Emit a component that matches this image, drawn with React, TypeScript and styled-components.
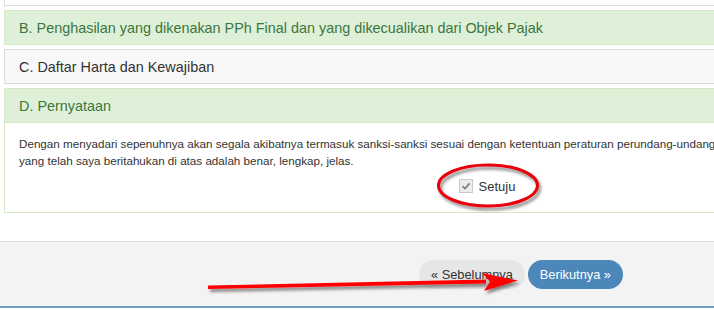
import React from 'react';
import styled, { createGlobalStyle } from 'styled-components';

const GlobalStyle = createGlobalStyle`
  html, body {
    margin: 0;
    padding: 0;
    background: #fff;
    overflow: hidden;
  }
  body {
    font-family: 'Liberation Sans', Arial, sans-serif;
    color: #333;
  }
`;

const Page = styled.div`
  position: relative;
  width: 714px;
  height: 310px;
  overflow: hidden;
`;

const PanelGroup = styled.div`
  display: flex;
  flex-direction: column;
  gap: 4px;
  width: 966px;
  margin-left: 4px;
`;

const PanelStub = styled.div`
  height: 5px;
  border: 1px solid #ddd;
  border-top: none;
  background: #fff;
`;

const Panel = styled.div<{ $tone: 'success' | 'default' }>`
  border: 1px solid ${(p) => (p.$tone === 'success' ? '#d6e9c6' : '#ddd')};
  background: #fff;
`;

const PanelHeading = styled.div<{ $tone: 'success' | 'default' }>`
  height: 33px;
  display: flex;
  align-items: center;
  padding: 0 14px;
  font-size: 14.4px;
  color: ${(p) => (p.$tone === 'success' ? '#3c763d' : '#333')};
  background: ${(p) => (p.$tone === 'success' ? '#dff0d8' : '#f8f8f8')};
`;

const PanelBody = styled.div`
  border-top: 1px solid #d6e9c6;
  padding: 12px 14px 16px;
  font-size: 11.65px;
  line-height: 17px;
`;

const Statement = styled.p`
  margin: 0 0 7px;
  white-space: nowrap;
`;

const AgreeRow = styled.label`
  display: flex;
  align-items: center;
  justify-content: center;
  gap: 6px;
  height: 20px;
  font-size: 13px;
  color: #333;
`;

const CheckBox = styled.span`
  display: inline-flex;
  align-items: center;
  justify-content: center;
  width: 14px;
  height: 14px;
  box-sizing: border-box;
  border: 1px solid #c8c8c8;
  background: #ececec;
`;

const Footer = styled.div`
  margin-top: 28px;
  border-top: 1px solid #dcdcdc;
  border-bottom: 2px solid #6d9cc4;
  background: #f3f3f3;
  padding: 18px 0 17px 419px;
  display: flex;
  gap: 3px;
`;

const NavButton = styled.button<{ $primary?: boolean }>`
  height: 29px;
  padding: 0 12px;
  border: none;
  border-radius: 15px;
  font-family: 'Liberation Sans', Arial, sans-serif;
  font-size: 12.8px;
  color: ${(p) => (p.$primary ? '#fff' : '#333')};
  background: ${(p) => (p.$primary ? '#4b87b9' : '#e6e6e6')};
  cursor: pointer;
`;

const Overlay = styled.svg`
  position: absolute;
  left: 0;
  top: 0;
  pointer-events: none;
`;

export default function App() {
  return (
    <Page>
      <GlobalStyle />
      <PanelGroup>
        <PanelStub />
        <Panel $tone="success">
          <PanelHeading $tone="success">
            B. Penghasilan yang dikenakan PPh Final dan yang dikecualikan dari Objek Pajak
          </PanelHeading>
        </Panel>
        <Panel $tone="default">
          <PanelHeading $tone="default">C. Daftar Harta dan Kewajiban</PanelHeading>
        </Panel>
        <Panel $tone="success">
          <PanelHeading $tone="success">D. Pernyataan</PanelHeading>
          <PanelBody>
            <Statement>
              Dengan menyadari sepenuhnya akan segala akibatnya termasuk sanksi-sanksi sesuai dengan
              ketentuan peraturan perundang-undangan yang berlaku, saya menyatakan bahwa apa
              <br />
              yang telah saya beritahukan di atas adalah benar, lengkap, jelas.
            </Statement>
            <AgreeRow>
              <CheckBox>
                <svg width="10" height="10" viewBox="0 0 10 10">
                  <path d="M1.5 5.2 L4 7.6 L8.6 2.4" fill="none" stroke="#7a7a7a" strokeWidth="1.6" />
                </svg>
              </CheckBox>
              Setuju
            </AgreeRow>
          </PanelBody>
        </Panel>
      </PanelGroup>
      <Footer>
        <NavButton>« Sebelumnya</NavButton>
        <NavButton $primary>Berikutnya »</NavButton>
      </Footer>
      <Overlay width="714" height="310" viewBox="0 0 714 310">
        <defs>
          <filter id="shadow" x="-20%" y="-50%" width="140%" height="200%">
            <feDropShadow dx="2" dy="3" stdDeviation="1.5" floodColor="#000" floodOpacity="0.45" />
          </filter>
        </defs>
        <ellipse
          cx="488"
          cy="185.5"
          rx="49.5"
          ry="20.5"
          fill="none"
          stroke="#e8000b"
          strokeWidth="3"
          filter="url(#shadow)"
        />
        <g filter="url(#shadow)" fill="#ff0000">
          <path d="M208 285.5 L486 279.5 L486 283.5 L208 289 Z" />
          <path d="M482 273 L518 280.5 L484 291 L490 281.5 Z" />
        </g>
      </Overlay>
    </Page>
  );
}
